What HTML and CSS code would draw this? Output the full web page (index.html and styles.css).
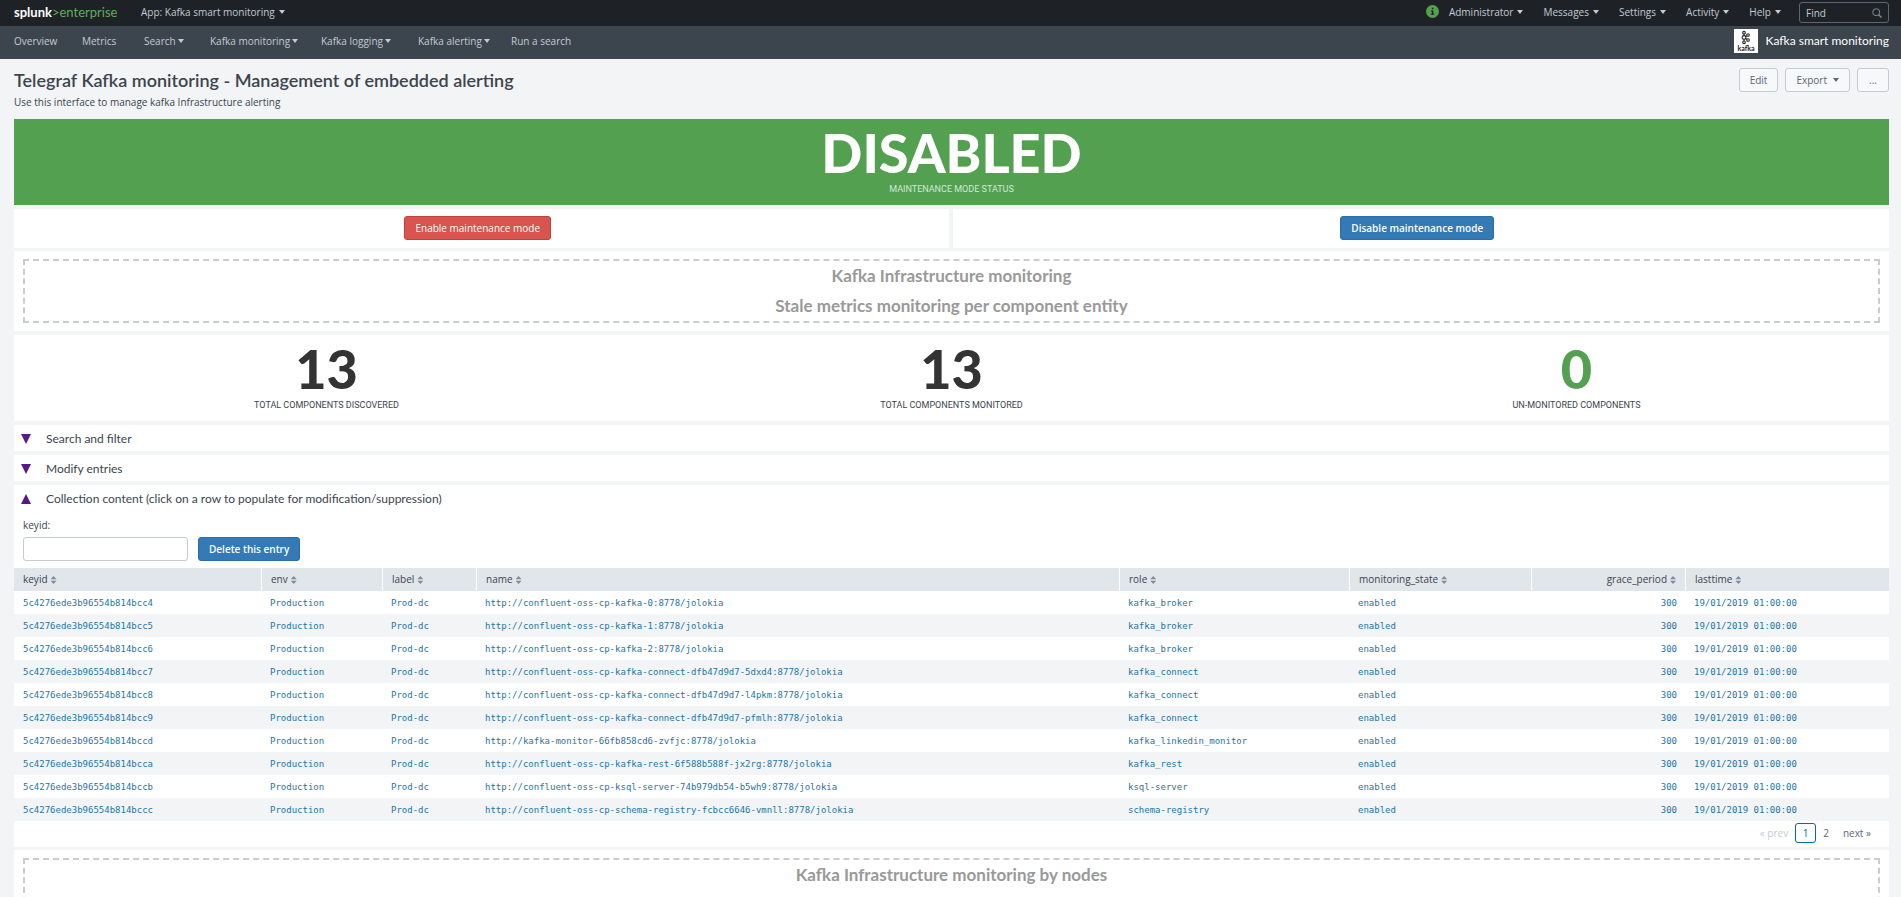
FILE: index.html
```html
<!DOCTYPE html>
<html lang="en">
<head>
<meta charset="utf-8">
<title>Telegraf Kafka monitoring - Management of embedded alerting</title>
<link rel="stylesheet" href="styles.css">
</head>
<body>
<header class="topbar">
  <a class="brand" href="#"><b>splunk</b><span class="brand-gt">&gt;</span><span class="brand-ent">enterprise</span></a>
  <button class="menu">App: Kafka smart monitoring<i class="caret"></i></button>
  <div class="topbar-right">
    <svg class="info" viewBox="0 0 13 13" aria-hidden="true"><circle cx="6.500" cy="6.500" r="6.500" fill="#53a051"/><path d="M5.800 2.800h1.600v1.500H5.800zM5 5.400h2.400v3.400h.8v1H4.900v-1h.9V6.400H5z" fill="#1e2227"/></svg>
    <button class="menu">Administrator<i class="caret"></i></button>
    <button class="menu">Messages<i class="caret"></i></button>
    <button class="menu">Settings<i class="caret"></i></button>
    <button class="menu">Activity<i class="caret"></i></button>
    <button class="menu">Help<i class="caret"></i></button>
    <div class="find">
      <input type="text" placeholder="Find" aria-label="Find">
      <svg viewBox="0 0 10 10" aria-hidden="true"><circle cx="4.200" cy="4.200" r="3.500" fill="none" stroke="#818d99"/><path d="M6.700 6.700L9.500 9.500" stroke="#818d99" stroke-width="1.400"/></svg>
    </div>
  </div>
</header>
<nav class="nav">
  <a class="w-overview" href="#">Overview</a>
  <a class="w-metrics" href="#">Metrics</a>
  <a class="w-search" href="#">Search<i class="caret"></i></a>
  <a class="w-monitoring" href="#">Kafka monitoring<i class="caret"></i></a>
  <a class="w-logging" href="#">Kafka logging<i class="caret"></i></a>
  <a class="w-alerting" href="#">Kafka alerting<i class="caret"></i></a>
  <a href="#">Run a search</a>
  <a class="app" href="#">
    <svg viewBox="0 0 24 24" aria-hidden="true"><rect width="24" height="24" fill="#fff"/><g fill="none" stroke="#222" stroke-width="1.100"><circle cx="10" cy="3.700" r="1.300"/><circle cx="10" cy="8.500" r="1.900"/><circle cx="10" cy="13.300" r="1.300"/><circle cx="14" cy="6" r="1.300"/><circle cx="14" cy="11" r="1.300"/><path d="M10 5v1.600M10 10.400v1.600M11.600 7.500l1.200-.8M11.600 9.500l1.200.8"/></g><text x="12" y="21.500" text-anchor="middle" class="kafka-word">kafka</text></svg>
    <span>Kafka smart monitoring</span>
  </a>
</nav>
<main class="page">
  <div class="heading">
    <div>
      <h1>Telegraf Kafka monitoring - Management of embedded alerting</h1>
      <p>Use this interface to manage kafka Infrastructure alerting</p>
    </div>
    <div class="actions">
      <button class="btn">Edit</button>
      <button class="btn">Export<i class="caret"></i></button>
      <button class="btn more">...</button>
    </div>
  </div>
  <section class="single status"><strong>DISABLED</strong><span>MAINTENANCE MODE STATUS</span></section>
  <div class="pair">
    <section class="panel"><button class="btn danger">Enable maintenance mode</button></section>
    <section class="panel"><button class="btn primary">Disable maintenance mode</button></section>
  </div>
  <section class="panel banner"><div><h2>Kafka Infrastructure monitoring</h2><h2>Stale metrics monitoring per component entity</h2></div></section>
  <section class="panel totals">
    <div class="single"><strong>13</strong><span>TOTAL COMPONENTS DISCOVERED</span></div>
    <div class="single"><strong>13</strong><span>TOTAL COMPONENTS MONITORED</span></div>
    <div class="single ok"><strong>0</strong><span>UN-MONITORED COMPONENTS</span></div>
  </section>
  <section class="panel"><button class="fold"><i class="tri"></i>Search and filter</button></section>
  <section class="panel"><button class="fold"><i class="tri"></i>Modify entries</button></section>
  <section class="panel collection">
    <button class="fold"><i class="tri up"></i>Collection content (click on a row to populate for modification/suppression)</button>
    <form class="entry">
      <label for="keyid">keyid:</label>
      <div><input id="keyid" type="text"><button type="button" class="btn primary">Delete this entry</button></div>
    </form>
    <table>
      <colgroup><col class="c1"><col class="c2"><col class="c3"><col class="c4"><col class="c5"><col class="c6"><col class="c7"><col class="c8"></colgroup>
      <thead><tr><th>keyid<i class="sort"></i></th><th>env<i class="sort"></i></th><th>label<i class="sort"></i></th><th>name<i class="sort"></i></th><th>role<i class="sort"></i></th><th>monitoring_state<i class="sort"></i></th><th class="num">grace_period<i class="sort"></i></th><th>lasttime<i class="sort"></i></th></tr></thead>
      <tbody>
      <tr><td>5c4276ede3b96554b814bcc4</td><td>Production</td><td>Prod-dc</td><td>http://confluent-oss-cp-kafka-0:8778/jolokia</td><td>kafka_broker</td><td>enabled</td><td class="num">300</td><td>19/01/2019 01:00:00</td></tr>
      <tr><td>5c4276ede3b96554b814bcc5</td><td>Production</td><td>Prod-dc</td><td>http://confluent-oss-cp-kafka-1:8778/jolokia</td><td>kafka_broker</td><td>enabled</td><td class="num">300</td><td>19/01/2019 01:00:00</td></tr>
      <tr><td>5c4276ede3b96554b814bcc6</td><td>Production</td><td>Prod-dc</td><td>http://confluent-oss-cp-kafka-2:8778/jolokia</td><td>kafka_broker</td><td>enabled</td><td class="num">300</td><td>19/01/2019 01:00:00</td></tr>
      <tr><td>5c4276ede3b96554b814bcc7</td><td>Production</td><td>Prod-dc</td><td>http://confluent-oss-cp-kafka-connect-dfb47d9d7-5dxd4:8778/jolokia</td><td>kafka_connect</td><td>enabled</td><td class="num">300</td><td>19/01/2019 01:00:00</td></tr>
      <tr><td>5c4276ede3b96554b814bcc8</td><td>Production</td><td>Prod-dc</td><td>http://confluent-oss-cp-kafka-connect-dfb47d9d7-l4pkm:8778/jolokia</td><td>kafka_connect</td><td>enabled</td><td class="num">300</td><td>19/01/2019 01:00:00</td></tr>
      <tr><td>5c4276ede3b96554b814bcc9</td><td>Production</td><td>Prod-dc</td><td>http://confluent-oss-cp-kafka-connect-dfb47d9d7-pfmlh:8778/jolokia</td><td>kafka_connect</td><td>enabled</td><td class="num">300</td><td>19/01/2019 01:00:00</td></tr>
      <tr><td>5c4276ede3b96554b814bccd</td><td>Production</td><td>Prod-dc</td><td>http://kafka-monitor-66fb858cd6-zvfjc:8778/jolokia</td><td>kafka_linkedin_monitor</td><td>enabled</td><td class="num">300</td><td>19/01/2019 01:00:00</td></tr>
      <tr><td>5c4276ede3b96554b814bcca</td><td>Production</td><td>Prod-dc</td><td>http://confluent-oss-cp-kafka-rest-6f588b588f-jx2rg:8778/jolokia</td><td>kafka_rest</td><td>enabled</td><td class="num">300</td><td>19/01/2019 01:00:00</td></tr>
      <tr><td>5c4276ede3b96554b814bccb</td><td>Production</td><td>Prod-dc</td><td>http://confluent-oss-cp-ksql-server-74b979db54-b5wh9:8778/jolokia</td><td>ksql-server</td><td>enabled</td><td class="num">300</td><td>19/01/2019 01:00:00</td></tr>
      <tr><td>5c4276ede3b96554b814bccc</td><td>Production</td><td>Prod-dc</td><td>http://confluent-oss-cp-schema-registry-fcbcc6646-vmnll:8778/jolokia</td><td>schema-registry</td><td>enabled</td><td class="num">300</td><td>19/01/2019 01:00:00</td></tr>
      </tbody>
    </table>
    <div class="pager"><a class="off" href="#">« prev</a><a class="current" href="#">1</a><a href="#">2</a><a class="next" href="#">next »</a></div>
  </section>
  <section class="panel banner"><div><h2>Kafka Infrastructure monitoring by nodes</h2></div></section>
</main>
</body>
</html>
```
FILE: styles.css
```css
* { box-sizing: border-box; }
body {
  margin: 0;
  height: 100vh;
  overflow: hidden;
  background: #f2f4f5;
  color: #3c444d;
  font: 10px/16px "Open Sans", sans-serif;
}
a { color: inherit; text-decoration: none; }
button, input { font: inherit; color: inherit; }
button { border: 0; background: none; padding: 0; cursor: pointer; }
h1, h2, p { margin: 0; }

.caret {
  display: inline-block;
  margin-left: 4px;
  border: 3px solid transparent;
  border-top: 4px solid currentColor;
  border-bottom: 0;
  vertical-align: 2px;
}

.topbar {
  display: flex;
  align-items: center;
  height: 26px;
  padding: 0 12px 3px 14px;
  background: #1e2227;
  color: #c3cbd4;
}
.brand { width: 127px; font: 13px/16px Lato, sans-serif; color: #fff; }
.brand-gt, .brand-ent { color: #5cb05a; }
.topbar-right { display: flex; align-items: center; gap: 20px; margin-left: auto; }
.info { width: 13px; height: 13px; margin-right: -10px; }
.find {
  display: flex;
  align-items: center;
  width: 90px;
  height: 21px;
  margin-top: 2px;
  margin-left: -2px;
  padding: 0 6px;
  border: 1px solid #5c6773;
  border-radius: 3px;
}
.find input { flex: 1; min-width: 0; padding: 0; border: 0; outline: 0; background: none; }
.find input::placeholder { color: #c3cbd4; opacity: 1; }
.find svg { width: 10px; height: 10px; }

.nav {
  display: flex;
  align-items: center;
  height: 33px;
  padding: 0 12px 3px 14px;
  background: #3c444d;
  color: #c3cbd4;
}
.nav .caret { margin-left: 2px; }
.w-overview { width: 68px; }
.w-metrics { width: 62px; }
.w-search { width: 66px; }
.w-monitoring { width: 111px; }
.w-logging { width: 97px; }
.w-alerting { width: 93px; }
.app { display: flex; align-items: center; gap: 8px; margin-left: auto; color: #fff; font: 12px/16px Lato, sans-serif; }
.app svg { width: 24px; height: 24px; }
.kafka-word { font: bold 7px Lato, sans-serif; fill: #222; }

.page { display: flex; flex-direction: column; gap: 4px; padding: 0 12px 0 14px; }
.heading { display: flex; justify-content: space-between; height: 56px; padding-top: 9px; }
h1 { font: 600 18px/24px Lato, sans-serif; }
.heading p { margin-top: 2px; }
.actions { display: flex; gap: 7px; }
.btn {
  height: 24px;
  padding: 0 10px;
  border: 1px solid #c3cbd4;
  border-radius: 3px;
  background: #f7f8fa;
  color: #5c6773;
}
.btn .caret { margin-left: 6px; }
.more { width: 32px; }
.danger { border-color: #c0403c; background: #d9534f; color: #fff; }
.primary { border-color: #2e6da4; background: #337ab7; color: #fff; font-weight: 600; }

.panel { background: #fff; }
.single { display: flex; flex-direction: column; align-items: center; height: 86px; padding-top: 6px; font: 9px/16px Roboto, sans-serif; }
.single strong { font: 900 54px/56px Lato, sans-serif; color: #333; }
.status { background: #53a051; color: #d4e8d3; }
.status strong { color: #fff; }
.ok strong { color: #53a051; }
.pair { display: grid; grid-template-columns: calc(50% - 3px) 1fr; gap: 4px; }
.pair .panel { height: 39px; padding: 7px 7px 0 0; text-align: center; }
.banner { margin-top: -1px; padding: 8px 9px; }
.banner div { border: 2px dashed #ccc; text-align: center; }
.banner:last-child div { min-height: 64px; }
h2 { font: bold 17px/30px Lato, sans-serif; color: #999; }
.totals { display: grid; grid-template-columns: 1fr 1fr 1fr; }
.fold { display: flex; align-items: center; height: 26px; padding: 2px 0 0 7px; font: 12px/16px Lato, sans-serif; }
.tri { width: 10px; height: 10px; margin-right: 15px; background: #551a8b; clip-path: polygon(0 0, 100% 0, 50% 100%); }
.tri.up { clip-path: polygon(0 100%, 100% 100%, 50% 0); }

.entry { padding: 6px 9px 7px; }
.entry label { display: block; height: 20px; }
.entry div { display: flex; gap: 10px; }
.entry input { width: 165px; height: 24px; border: 1px solid #c3cbd4; border-radius: 3px; }
table { width: 100%; border-collapse: separate; border-spacing: 0; table-layout: fixed; }
th, td { height: 23px; padding: 0 9px; text-align: left; white-space: nowrap; }
th { padding-bottom: 1px; background: #e1e6eb; font-weight: normal; border-right: 1px solid #fff; color: #3c444d; }
th:last-child { border-right: 0; }
td { font: 9px/16px "DejaVu Sans Mono", monospace; color: #1e76a8; }
td:not(:first-child) { padding-left: 8px; }
tbody tr:nth-child(even) { background: #f2f4f5; }
.num { text-align: right; }
.c1 { width: 248px; }
.c2 { width: 121px; }
.c3 { width: 94px; }
.c4 { width: 643px; }
.c5 { width: 230px; }
.c6 { width: 182px; }
.c7 { width: 154px; }
.c8 { width: 203px; }
.sort { display: inline-block; width: 6px; height: 8px; margin-left: 3px; vertical-align: -1px; background: #818d99; clip-path: polygon(50% 0, 100% 40%, 0 40%, 0 60%, 100% 60%, 50% 100%, 0 60%, 0 40%); }
.pager { display: flex; align-items: center; justify-content: flex-end; height: 26px; padding: 0 18px 2px 0; color: #5c6773; }
.pager a { padding: 0 7px; }
.pager .off { color: #c3cbd4; }
.pager .current { width: 21px; height: 20px; padding: 0; border: 1px solid #006d9c; border-radius: 3px; text-align: center; line-height: 18px; color: #006d9c; }
.pager .next { padding-right: 0; }
```
